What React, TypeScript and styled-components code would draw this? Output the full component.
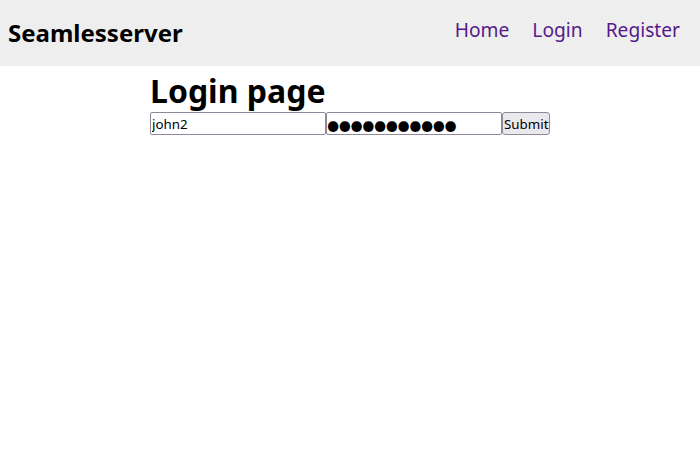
import { FC, useState } from 'react';
import styled, { createGlobalStyle } from 'styled-components';

const GlobalStyle = createGlobalStyle`
  html, body {
    margin: 0;
    padding: 0;
    background: #fff;
    font-family: "Noto Sans", sans-serif;
  }
`;

const Page = styled.div`
  min-height: 636px;
`;

const Header = styled.header`
  height: 66px;
  display: flex;
  align-items: center;
  justify-content: space-between;
  padding: 0 20px 0 8px;
  background: #eeeeee;
`;

const Brand = styled.h2`
  margin: -1px 0 0;
  font-size: 24px;
  font-weight: 700;
  color: #000;
`;

const Nav = styled.nav`
  display: flex;
  gap: 23px;
  margin-top: -8px;
`;

const NavLink = styled.a`
  font-size: 19.2px;
  color: #551a8b;
  text-decoration: none;
`;

const Main = styled.main`
  width: 400px;
  margin: 0 auto;
`;

const Title = styled.h1`
  margin: 5px 0 1px;
  font-size: 32px;
  font-weight: 700;
  line-height: 40px;
`;

const Form = styled.form`
  display: flex;
`;

const Field = styled.input<{ $masked?: boolean }>`
  box-sizing: border-box;
  width: 176px;
  height: 23px;
  margin: 0;
  padding: ${({ $masked }) => ($masked ? '1px 1px 1px 0' : '1px')};
  border: 1px solid #8f8a9b;
  border-radius: 2px;
  font-family: ${({ $masked }) => ($masked ? 'Lato, sans-serif' : '"Noto Sans", sans-serif')};
  font-size: ${({ $masked }) => ($masked ? '28px' : '13.33px')};
  letter-spacing: ${({ $masked }) => ($masked ? '-4.5px' : 'normal')};
  text-indent: ${({ $masked }) => ($masked ? '-2px' : '0')};
  color: #000;
  background: #fff;
`;

const SubmitButton = styled.button`
  box-sizing: border-box;
  height: 23px;
  margin: 0;
  padding: 0 1px;
  border: 1px solid #8f8a9b;
  border-radius: 3px;
  background: #e9e9ed;
  font-family: "Noto Sans", sans-serif;
  font-size: 13.33px;
  color: #000;
`;

const App: FC = () => {
  const [user, setUser] = useState('john2');
  const [pass, setPass] = useState('secretpass1');

  return (
    <Page>
      <GlobalStyle />
      <Header>
        <Brand>Seamlesserver</Brand>
        <Nav>
          <NavLink href="#">Home</NavLink>
          <NavLink href="#">Login</NavLink>
          <NavLink href="#">Register</NavLink>
        </Nav>
      </Header>
      <Main>
        <Title>Login page</Title>
        <Form onSubmit={e => e.preventDefault()}>
          <Field type="text" value={user} onChange={e => setUser(e.target.value)} />
          <Field type="password" $masked value={pass} onChange={e => setPass(e.target.value)} />
          <SubmitButton type="submit">Submit</SubmitButton>
        </Form>
      </Main>
    </Page>
  );
};

export default App;
